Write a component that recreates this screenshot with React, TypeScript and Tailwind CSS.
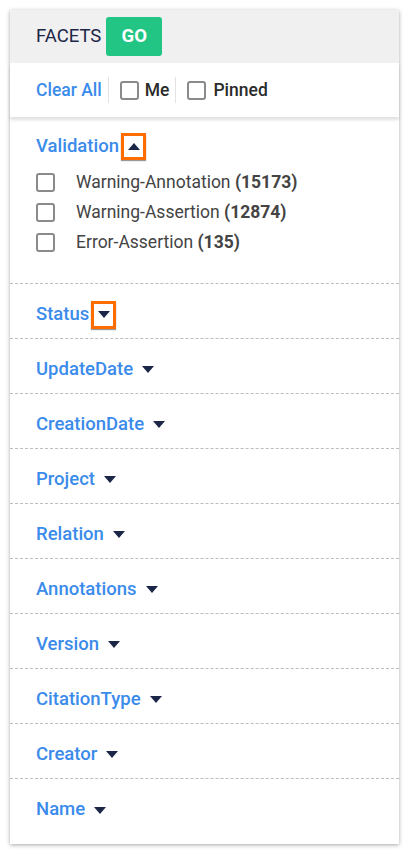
import { useState } from 'react';

const facets = [
  'Status',
  'UpdateDate',
  'CreationDate',
  'Project',
  'Relation',
  'Annotations',
  'Version',
  'CitationType',
  'Creator',
  'Name',
];

const validation = [
  { label: 'Warning-Annotation', count: 15173 },
  { label: 'Warning-Assertion', count: 12874 },
  { label: 'Error-Assertion', count: 135 },
];

function Caret({ up = false }: { up?: boolean }) {
  return (
    <svg width="12" height="7" viewBox="0 0 12 7" className="text-[#1c2647]">
      {up ? <path d="M0 7 L6 0 L12 7 Z" fill="currentColor" /> : <path d="M0 0 L12 0 L6 7 Z" fill="currentColor" />}
    </svg>
  );
}

function Box() {
  return <span className="inline-block h-[19px] w-[19px] shrink-0 rounded-[3px] border-2 border-[#8a8a8a] bg-white" />;
}

export default function App() {
  const [open] = useState(true);

  return (
    <div className="min-h-screen bg-white p-[10px]" style={{ fontFamily: 'Roboto, "Liberation Sans", sans-serif' }}>
      <div className="h-[834px] w-[389px] bg-white shadow-[0_1px_4px_rgba(0,0,0,0.35)]">
        {/* header */}
        <div className="flex h-[53px] items-center gap-[5px] bg-[#f0f0f0] pl-[26px]">
          <span className="text-[18.5px] text-[#1c2647]">FACETS</span>
          <button className="h-[39px] w-[56px] rounded-[3px] bg-[#22c584] text-[18.5px] font-bold text-white">GO</button>
        </div>

        {/* filters */}
        <div className="relative flex h-[54px] items-center pl-[26px] shadow-[0_3px_3px_rgba(0,0,0,0.12)]">
          <span className="text-[17.5px] font-medium text-[#3b8beb]">Clear All</span>
          <span className="ml-[6px] h-[26px] w-px bg-[#e3e3e3]" />
          <label className="ml-[11px] flex items-center gap-[6px]">
            <Box />
            <span className="text-[17.5px] font-medium text-[#2b2b2b]">Me</span>
          </label>
          <span className="ml-[6px] h-[26px] w-px bg-[#e3e3e3]" />
          <label className="ml-[11px] flex items-center gap-[7px]">
            <Box />
            <span className="text-[17.5px] font-medium text-[#2b2b2b]">Pinned</span>
          </label>
        </div>

        {/* validation */}
        <div className="border-b border-dashed border-[#bdbdbd] pb-[26px] pl-[26px] pt-[16px]">
          <div className="flex h-[27px] items-center">
            <span className="text-[18.5px] font-medium text-[#3b8beb]">Validation</span>
            <span className="ml-[2px] flex h-[27px] w-[25px] items-center justify-center border-[3px] border-[#ff6d00] bg-white shadow-[0_1px_1px_rgba(0,0,0,0.4)]">
              <Caret up={open} />
            </span>
          </div>
          <div className="mt-[7px] flex flex-col">
            {validation.map((v) => (
              <label key={v.label} className="flex h-[30px] items-center gap-[21px]">
                <Box />
                <span className="text-[17.5px] text-[#444]">
                  {v.label} <b className="font-bold">({v.count})</b>
                </span>
              </label>
            ))}
          </div>
        </div>

        {facets.map((f, i) => (
          <div
            key={f}
            className={`flex h-[55px] items-center pl-[26px] pt-[7px] ${i < facets.length - 1 ? 'border-b border-dashed border-[#bdbdbd]' : ''}`}
          >
            <span className="text-[18.5px] font-medium text-[#3b8beb]">{f}</span>
            {i === 0 ? (
              <span className="ml-[2px] flex h-[28px] w-[25px] items-center justify-center border-[3px] border-[#ff6d00] bg-white shadow-[0_1px_1px_rgba(0,0,0,0.4)]">
                <Caret />
              </span>
            ) : (
              <span className="ml-[9px] flex items-center">
                <Caret />
              </span>
            )}
          </div>
        ))}
      </div>
    </div>
  );
}
